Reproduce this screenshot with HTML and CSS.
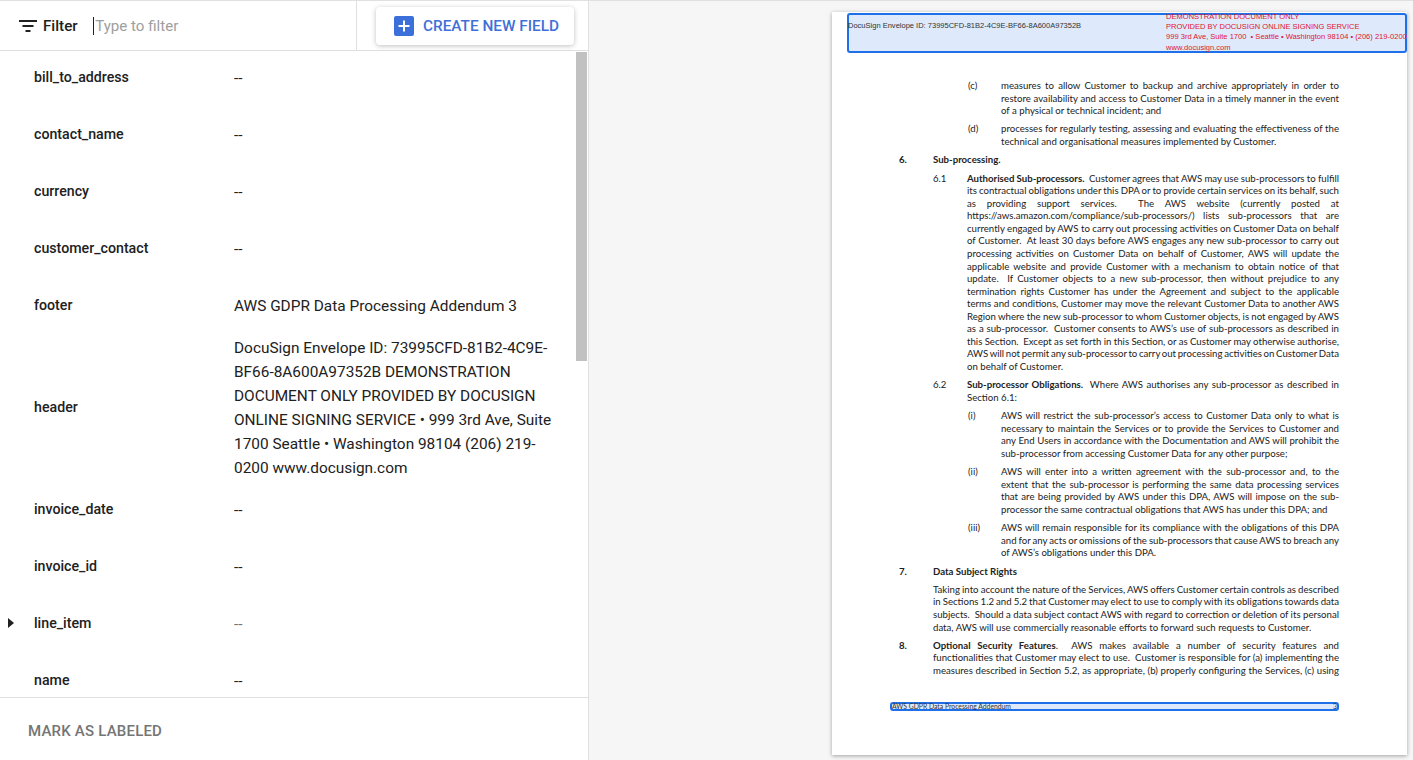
FILE: index.html
```html
<!DOCTYPE html>
<html>
  <head>
    <meta charset="UTF-8" />
    <title>Labeling</title>
    <link rel="stylesheet" href="styles.css">
  </head>
  <body>
    <div class="app">
      <section class="panel">
        <div class="toolbar">
          <div class="filter">
            <svg class="filter-icon" width="24" height="24" viewBox="0 0 24 24"><path d="M3 6h18v2H3zM6.5 11h11v2h-11zM9.5 16h5v2h-5z" fill="#212121"/></svg>
            <span class="filter-label">Filter</span>
            <span class="caret"></span>
            <span class="placeholder">Type to filter</span>
          </div>
          <div class="create-wrap">
            <button class="create-btn">
              <svg width="20" height="20" viewBox="0 0 20 20"><rect width="20" height="20" rx="2" fill="#3b6fd9"/><path d="M9 4.5h2V9h4.5v2H11v4.5H9V11H4.5V9H9z" fill="#fff"/></svg>
              <span>CREATE NEW FIELD</span>
            </button>
          </div>
        </div>

        <div class="fields">
          <div class="field-list">
            <div class="field"><div class="field-name">bill_to_address</div><div class="field-value">--</div></div>
            <div class="field"><div class="field-name">contact_name</div><div class="field-value">--</div></div>
            <div class="field"><div class="field-name">currency</div><div class="field-value">--</div></div>
            <div class="field"><div class="field-name">customer_contact</div><div class="field-value">--</div></div>
            <div class="field"><div class="field-name">footer</div><div class="field-value">AWS GDPR Data Processing Addendum 3</div></div>
            <div class="field"><div class="field-name">header</div><div class="field-value">DocuSign Envelope ID: 73995CFD-81B2-4C9E-BF66-8A600A97352B DEMONSTRATION DOCUMENT ONLY PROVIDED BY DOCUSIGN ONLINE SIGNING SERVICE • 999 3rd Ave, Suite 1700 Seattle • Washington 98104 (206) 219-0200 www.docusign.com</div></div>
            <div class="field"><div class="field-name">invoice_date</div><div class="field-value">--</div></div>
            <div class="field"><div class="field-name">invoice_id</div><div class="field-value">--</div></div>
            <div class="field">
              <svg class="expand" width="6" height="10" viewBox="0 0 6 10"><path d="M0 0l6 5-6 5z" fill="#212121"/></svg>
              <div class="field-name">line_item</div><div class="field-value muted">--</div>
            </div>
            <div class="field"><div class="field-name">name</div><div class="field-value">--</div></div>
          </div>
          <div class="scrollbar"><div class="thumb"></div></div>
        </div>

        <div class="panel-footer">MARK AS LABELED</div>
      </section>

      <section class="viewer">
        <div class="page">
          <div class="box box-header">
            <div class="envelope">DocuSign Envelope ID: 73995CFD-81B2-4C9E-BF66-8A600A97352B</div>
            <div class="demo">
              <div>DEMONSTRATION DOCUMENT ONLY</div>
              <div>PROVIDED BY DOCUSIGN ONLINE SIGNING SERVICE</div>
              <div>999 3rd Ave, Suite 1700 &nbsp;• Seattle • Washington 98104 • (206) 219-0200</div>
              <div>www.docusign.com</div>
            </div>
          </div>

          <div class="doc">
            <div class="clause sub2">
              <div>(c)</div>
              <div>
                <div class="ln">measures to allow Customer to backup and archive appropriately in order to</div>
                <div class="ln">restore availability and access to Customer Data in a timely manner in the event</div>
                <div>of a physical or technical incident; and</div>
              </div>
            </div>
            <div class="clause sub2">
              <div>(d)</div>
              <div>
                <div class="ln">processes for regularly testing, assessing and evaluating the effectiveness of the</div>
                <div>technical and organisational measures implemented by Customer.</div>
              </div>
            </div>
            <div class="clause top">
              <b>6.</b>
              <b>Sub-processing.</b>
            </div>
            <div class="clause sub1">
              <div>6.1</div>
              <div>
                <div class="ln"><b>Authorised Sub-processors.</b>&nbsp; Customer agrees that AWS may use sub-processors to fulfill</div>
                <div class="ln">its contractual obligations under this DPA or to provide certain services on its behalf, such</div>
                <div class="ln">as providing support services. &nbsp;The AWS website (currently posted at</div>
                <div class="ln">https://aws.amazon.com/compliance/sub-processors/) lists sub-processors that are</div>
                <div class="ln">currently engaged by AWS to carry out processing activities on Customer Data on behalf</div>
                <div class="ln">of Customer. &nbsp;At least 30 days before AWS engages any new sub-processor to carry out</div>
                <div class="ln">processing activities on Customer Data on behalf of Customer, AWS will update the</div>
                <div class="ln">applicable website and provide Customer with a mechanism to obtain notice of that</div>
                <div class="ln">update. &nbsp;If Customer objects to a new sub-processor, then without prejudice to any</div>
                <div class="ln">termination rights Customer has under the Agreement and subject to the applicable</div>
                <div class="ln">terms and conditions, Customer may move the relevant Customer Data to another AWS</div>
                <div class="ln">Region where the new sub-processor to whom Customer objects, is not engaged by AWS</div>
                <div class="ln">as a sub-processor. &nbsp;Customer consents to AWS’s use of sub-processors as described in</div>
                <div class="ln">this Section. &nbsp;Except as set forth in this Section, or as Customer may otherwise authorise,</div>
                <div class="ln">AWS will not permit any sub-processor to carry out processing activities on Customer Data</div>
                <div>on behalf of Customer.</div>
              </div>
            </div>
            <div class="clause sub1">
              <div>6.2</div>
              <div>
                <div class="ln"><b>Sub-processor Obligations.</b>&nbsp; Where AWS authorises any sub-processor as described in</div>
                <div>Section 6.1:</div>
              </div>
            </div>
            <div class="clause sub2">
              <div>(i)</div>
              <div>
                <div class="ln">AWS will restrict the sub-processor’s access to Customer Data only to what is</div>
                <div class="ln">necessary to maintain the Services or to provide the Services to Customer and</div>
                <div class="ln">any End Users in accordance with the Documentation and AWS will prohibit the</div>
                <div>sub-processor from accessing Customer Data for any other purpose;</div>
              </div>
            </div>
            <div class="clause sub2">
              <div>(ii)</div>
              <div>
                <div class="ln">AWS will enter into a written agreement with the sub-processor and, to the</div>
                <div class="ln">extent that the sub-processor is performing the same data processing services</div>
                <div class="ln">that are being provided by AWS under this DPA, AWS will impose on the sub-</div>
                <div>processor the same contractual obligations that AWS has under this DPA; and</div>
              </div>
            </div>
            <div class="clause sub2">
              <div>(iii)</div>
              <div>
                <div class="ln">AWS will remain responsible for its compliance with the obligations of this DPA</div>
                <div class="ln">and for any acts or omissions of the sub-processors that cause AWS to breach any</div>
                <div>of AWS’s obligations under this DPA.</div>
              </div>
            </div>
            <div class="clause top">
              <b>7.</b>
              <b>Data Subject Rights</b>
            </div>
            <div class="clause top">
              <div></div>
              <div>
                <div class="ln">Taking into account the nature of the Services, AWS offers Customer certain controls as described</div>
                <div class="ln">in Sections 1.2 and 5.2 that Customer may elect to use to comply with its obligations towards data</div>
                <div class="ln">subjects. &nbsp;Should a data subject contact AWS with regard to correction or deletion of its personal</div>
                <div>data, AWS will use commercially reasonable efforts to forward such requests to Customer.</div>
              </div>
            </div>
            <div class="clause top">
              <b>8.</b>
              <div>
                <div class="ln"><b>Optional Security Features</b>. &nbsp;AWS makes available a number of security features and</div>
                <div class="ln">functionalities that Customer may elect to use. &nbsp;Customer is responsible for (a) implementing the</div>
                <div class="ln">measures described in Section 5.2, as appropriate, (b) properly configuring the Services, (c) using</div>
              </div>
            </div>
          </div>

          <div class="box box-footer">
            <span>AWS GDPR Data Processing Addendum</span>
            <span>3</span>
          </div>
        </div>
      </section>
    </div>
  </body>
</html>
```

FILE: styles.css
```css
html,
body {
  height: 100%;
}
body {
  margin: 0;
  overflow: hidden;
  font-family: Roboto, sans-serif;
  color: #212121;
  background-color: #fff;
}
.app {
  display: flex;
  height: 760px;
  border-top: 1px solid #e0e0e0;
  box-sizing: border-box;
}

/* left panel */
.panel {
  width: 589px;
  flex: none;
  display: flex;
  flex-direction: column;
  box-sizing: border-box;
  border-right: 1px solid #e0e0e0;
  background-color: #fff;
}
.toolbar {
  height: 50px;
  flex: none;
  display: flex;
  box-sizing: border-box;
  border-bottom: 1px solid #e0e0e0;
}
.filter {
  flex: 1;
  display: flex;
  align-items: center;
  padding-left: 16px;
}
.filter-icon {
  width: 24px;
  height: 24px;
  margin-right: 3px;
}
.filter-label {
  font-size: 15.2px;
  font-weight: 500;
  margin-right: 15px;
}
.caret {
  width: 1.5px;
  height: 18px;
  background-color: #212121;
  margin-right: 1px;
}
.placeholder {
  font-size: 15.1px;
  color: #9e9e9e;
}
.create-wrap {
  width: 232px;
  flex: none;
  box-sizing: border-box;
  border-left: 1px solid #e0e0e0;
  padding: 6px 14px 0 19px;
}
.create-btn {
  width: 198px;
  height: 38px;
  display: flex;
  align-items: center;
  gap: 9px;
  padding: 0 0 0 18px;
  border: 0;
  border-radius: 4px;
  background-color: #fff;
  box-shadow: 0 1px 5px rgba(0, 0, 0, 0.25);
  font-family: Roboto, sans-serif;
  font-size: 15.35px;
  font-weight: 500;
  color: #3f6fd8;
}

.fields {
  flex: 1;
  display: flex;
  min-height: 0;
  overflow: hidden;
}
.field-list {
  flex: 1;
  min-width: 0;
  margin-top: -2.5px;
}
.field {
  position: relative;
  display: flex;
  align-items: center;
  min-height: 57px;
  padding: 1px 20px 1px 34px;
  box-sizing: border-box;
}
.field-name {
  width: 200px;
  flex: none;
  font-size: 14.2px;
  font-weight: 500;
}
.field-value {
  font-size: 15.4px;
  line-height: 24px;
  padding-top: 1px;
  color: #212121;
}
.field-value.muted {
  color: #757575;
}
.expand {
  position: absolute;
  left: 8px;
  top: 23px;
}
.scrollbar {
  width: 12px;
  flex: none;
  background-color: #fff;
  padding-top: 1px;
}
.thumb {
  width: 11px;
  height: 309px;
  background-color: #c1c1c1;
}
.panel-footer {
  height: 63px;
  flex: none;
  display: flex;
  align-items: center;
  box-sizing: border-box;
  padding: 4px 0 0 28px;
  border-top: 1px solid #e0e0e0;
  font-size: 15px;
  font-weight: 500;
  letter-spacing: 0.2px;
  color: #757575;
}

/* document viewer */
.viewer {
  flex: 1;
  background-color: #f6f6f6;
  padding: 11px 6px 0 243px;
  overflow: hidden;
}
.page {
  position: relative;
  width: 575px;
  height: 743px;
  background-color: #fff;
  box-shadow: 0 1px 4px rgba(0, 0, 0, 0.35);
  overflow: hidden;
}
.box {
  position: absolute;
  box-sizing: border-box;
  border: 2px solid #1f6fe8;
  border-radius: 3px;
}
.box-header {
  left: 15px;
  top: 1px;
  width: 560px;
  height: 39.5px;
  background-color: rgba(31, 111, 232, 0.15);
  font-family: "Liberation Sans", sans-serif;
}
.envelope {
  position: absolute;
  left: -1px;
  top: 6px;
  font-size: 7.53px;
  line-height: 10px;
  color: #333;
  white-space: nowrap;
}
.demo {
  position: absolute;
  left: 317px;
  top: -3px;
  font-size: 7.55px;
  line-height: 10.2px;
  color: #e0142e;
  white-space: nowrap;
}
.box-footer {
  left: 58px;
  top: 690px;
  width: 449px;
  height: 9px;
  display: flex;
  justify-content: space-between;
  align-items: center;
  font-family: Lato, sans-serif;
  font-size: 6.8px;
  line-height: 5px;
  color: #333;
  background-color: rgba(31, 111, 232, 0.15);
}
.doc {
  box-sizing: border-box;
  width: 440px;
  padding-top: 67px;
  margin-left: 67px;
  font-family: Lato, sans-serif;
  font-size: 9.65px;
  line-height: 12.55px;
  color: #222;
}
.clause {
  display: grid;
  margin-bottom: 5.8px;
}
.clause.top {
  grid-template-columns: 34px 1fr;
}
.clause.sub1 {
  grid-template-columns: 34px 1fr;
  margin-left: 34px;
}
.clause.sub2 {
  grid-template-columns: 33px 1fr;
  margin-left: 69px;
}
.ln {
  white-space: nowrap;
  word-spacing: -1px;
  text-align: justify;
  text-align-last: justify;
}
```
